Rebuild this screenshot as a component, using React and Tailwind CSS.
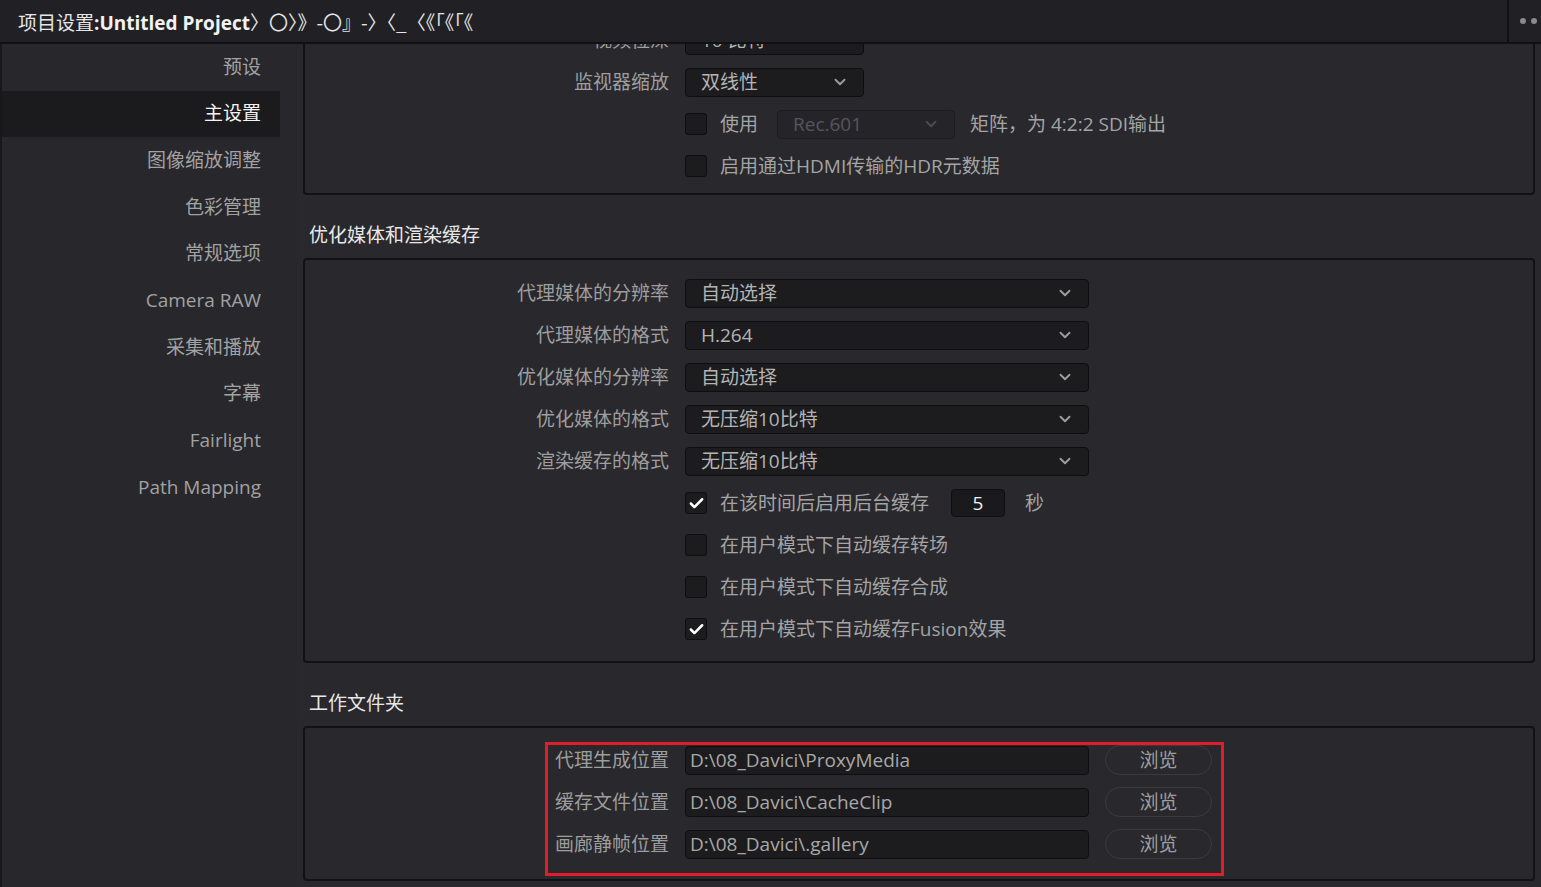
import { Check, ChevronDown } from 'lucide-react';

const font = { fontFamily: '"Open Sans", "Noto Sans CJK SC", sans-serif' };

const navItems = ['预设', '主设置', '图像缩放调整', '色彩管理', '常规选项', 'Camera RAW', '采集和播放', '字幕', 'Fairlight', 'Path Mapping'];

function Select({ value, width = 'w-[404px]', disabled = false }) {
  return (
    <div
      className={`${width} h-[29px] rounded-[4px] border flex items-center justify-between pl-[15px] pr-[14px] ${
        disabled ? 'bg-[#252529] border-[#1d1d20] text-[#55555b]' : 'bg-[#1c1c1f] border-[#0e0e10] text-[#b4b4b4]'
      }`}
    >
      <span className="leading-none">{value}</span>
      <ChevronDown className={`w-[18px] h-[18px] ${disabled ? 'text-[#4a4a50]' : 'text-[#9d9d9d]'}`} strokeWidth={2.5} />
    </div>
  );
}

function Checkbox({ checked }) {
  return (
    <div className="w-[22px] h-[22px] rounded-[3px] bg-[#1c1c1f] border border-[#0e0e10] flex items-center justify-center shrink-0">
      {checked && <Check className="w-[17px] h-[17px] text-white" strokeWidth={3.5} />}
    </div>
  );
}

function Row({ label, children }) {
  return (
    <div className="h-[42px] flex items-center">
      <div className="w-[364px] text-right text-[#9e9e9e] leading-none">{label}</div>
      <div className="ml-[16px] flex items-center">{children}</div>
    </div>
  );
}

function CheckRow({ checked, children }) {
  return (
    <Row label="">
      <Checkbox checked={checked} />
      <div className="ml-[13px] flex items-center text-[#a4a4a4] leading-none">{children}</div>
    </Row>
  );
}

function PathRow({ label, path }) {
  return (
    <Row label={label}>
      <div className="w-[404px] h-[29px] rounded-[4px] bg-[#1c1c1f] border border-[#0e0e10] flex items-center pl-[4px] text-[#a8a8a8] leading-none">
        {path}
      </div>
      <button className="ml-[16px] w-[107px] h-[30px] rounded-full border border-[#3a3a40] text-[#9e9e9e] leading-none">浏览</button>
    </Row>
  );
}

function Box({ children, className = '' }) {
  return <div className={`relative border-2 border-[#121214] rounded-[4px] bg-[#28282d] ${className}`}>{children}</div>;
}

function SectionTitle({ children }) {
  return <div className="h-[63px] flex items-end pl-[6px] pb-[13px] text-[#e8e8e8] leading-none">{children}</div>;
}

export default function App() {
  return (
    <div className="w-[1541px] h-[887px] bg-[#28282d] flex flex-col overflow-hidden text-[19px]" style={font}>
      {/* title bar */}
      <div className="h-[44px] shrink-0 bg-[#212125] border-b-2 border-[#111113] flex items-center">
        <div className="flex-1 pl-[18px] pt-[2px] text-[#e6e6e6] leading-none whitespace-nowrap">
          项目设置<span className="font-bold text-[#f2f2f2]">:Untitled Project</span>
          <span style={{ fontFamily: '"Noto Sans CJK SC", sans-serif' }}>〉〇〉》-〇』-〉〈_〈《「《「《</span>
        </div>
        <div className="h-full w-[34px] border-l-2 border-[#111113] flex items-center gap-[5px] pl-[11px]">
          <span className="w-[6px] h-[6px] rounded-full bg-[#8a8a8e] shrink-0" />
          <span className="w-[6px] h-[6px] rounded-full bg-[#8a8a8e] shrink-0" />
          <span className="w-[6px] h-[6px] rounded-full bg-[#8a8a8e] shrink-0" />
        </div>
      </div>

      <div className="flex flex-1 min-h-0">
        {/* sidebar */}
        <div className="w-[298px] shrink-0 bg-[#27272c] border-l-2 border-[#18181b]">
          {navItems.map((item) => (
            <div
              key={item}
              className={`w-[278px] h-[46.67px] flex items-center justify-end pr-[19px] leading-none ${
                item === '主设置' ? 'bg-[#1b1b1e] text-[#f4f4f4]' : 'text-[#a2a2a2]'
              }`}
            >
              {item}
            </div>
          ))}
        </div>

        {/* main */}
        <div className="flex-1 overflow-hidden pl-[5px] pr-[6px]">
          <div className="-mt-[38px]">
            <Box className="pt-[11px] pb-[6px]">
              <Row label="视频位深">
                <Select value="10 比特" width="w-[179px]" />
              </Row>
              <Row label="监视器缩放">
                <Select value="双线性" width="w-[179px]" />
              </Row>
              <CheckRow>
                使用
                <div className="ml-[19px] mr-[15px]">
                  <Select value="Rec.601" width="w-[178px]" disabled />
                </div>
                矩阵，为 4:2:2 SDI输出
              </CheckRow>
              <CheckRow>启用通过HDMI传输的HDR元数据</CheckRow>
            </Box>

            <SectionTitle>优化媒体和渲染缓存</SectionTitle>
            <Box className="pt-[12px] pb-[11px]">
              <Row label="代理媒体的分辨率">
                <Select value="自动选择" />
              </Row>
              <Row label="代理媒体的格式">
                <Select value="H.264" />
              </Row>
              <Row label="优化媒体的分辨率">
                <Select value="自动选择" />
              </Row>
              <Row label="优化媒体的格式">
                <Select value="无压缩10比特" />
              </Row>
              <Row label="渲染缓存的格式">
                <Select value="无压缩10比特" />
              </Row>
              <CheckRow checked>
                在该时间后启用后台缓存
                <div className="ml-[22px] w-[54px] h-[28px] rounded-[4px] bg-[#1a1a1c] border border-[#0e0e10] flex items-center justify-center text-[#f0f0f0]">
                  5
                </div>
                <span className="ml-[20px]">秒</span>
              </CheckRow>
              <CheckRow>在用户模式下自动缓存转场</CheckRow>
              <CheckRow>在用户模式下自动缓存合成</CheckRow>
              <CheckRow checked>在用户模式下自动缓存Fusion效果</CheckRow>
            </Box>

            <SectionTitle>工作文件夹</SectionTitle>
            <Box className="pt-[11px] pb-[14px]">
              <PathRow label="代理生成位置" path="D:\08_Davici\ProxyMedia" />
              <PathRow label="缓存文件位置" path="D:\08_Davici\CacheClip" />
              <PathRow label="画廊静帧位置" path="D:\08_Davici\.gallery" />
              <div className="absolute left-[240px] top-[14px] w-[679px] h-[134px] border-[3px] border-[#e11d2b] pointer-events-none" />
            </Box>
          </div>
        </div>
      </div>
    </div>
  );
}
